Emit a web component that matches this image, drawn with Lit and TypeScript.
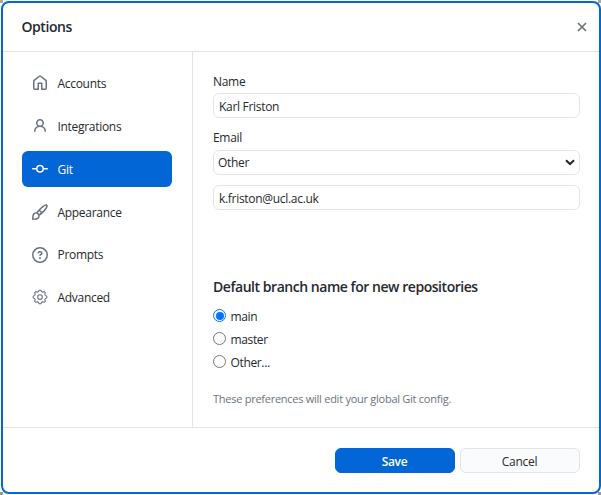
import { LitElement, html, css, svg } from "lit";
import { customElement, state } from "lit/decorators.js";

const gear = (() => {
  const pts: string[] = [];
  for (let i = 0; i < 96; i++) {
    const a = (i / 96) * Math.PI * 2;
    const r = 6.15 + 0.7 * Math.tanh(2 * Math.cos(8 * a));
    pts.push(`${(8 + r * Math.sin(a)).toFixed(2)} ${(8 - r * Math.cos(a)).toFixed(2)}`);
  }
  return `M${pts.join("L")}Z`;
})();

const fill = (d: string) => svg`<path fill="currentColor" fill-rule="evenodd" d=${d}></path>`;

const tabs = [
  { id: "accounts", label: "Accounts", icon: fill("M6.906.664a1.749 1.749 0 0 1 2.187 0l5.25 4.2c.415.332.657.835.657 1.367v7.019A1.75 1.75 0 0 1 13.25 15h-3.5a.75.75 0 0 1-.75-.75V9H7v5.25a.75.75 0 0 1-.75.75h-3.5A1.75 1.75 0 0 1 1 13.25V6.23c0-.531.242-1.034.657-1.366l5.25-4.2Zm1.25 1.171a.25.25 0 0 0-.312 0l-5.25 4.2a.25.25 0 0 0-.094.196v7.019c0 .138.112.25.25.25H5.5V8.25a.75.75 0 0 1 .75-.75h3.5a.75.75 0 0 1 .75.75v5.25h2.75a.25.25 0 0 0 .25-.25V6.23a.25.25 0 0 0-.094-.195Z") },
  { id: "integrations", label: "Integrations", icon: fill("M10.561 8.073a6.005 6.005 0 0 1 3.432 5.142.75.75 0 1 1-1.498.07 4.5 4.5 0 0 0-8.99 0 .75.75 0 0 1-1.498-.07 6.004 6.004 0 0 1 3.431-5.142 3.999 3.999 0 1 1 5.123 0ZM10.5 5a2.5 2.5 0 1 0-5 0 2.5 2.5 0 0 0 5 0Z") },
  { id: "git", label: "Git", icon: fill("M11.93 8.5a4.002 4.002 0 0 1-7.86 0H.75a.75.75 0 0 1 0-1.5h3.32a4.002 4.002 0 0 1 7.86 0h3.32a.75.75 0 0 1 0 1.5Zm-1.43-.75a2.5 2.5 0 1 0-5 0 2.5 2.5 0 0 0 5 0Z") },
  { id: "appearance", label: "Appearance", icon: fill("M11.134 1.535c.7-.509 1.416-.942 2.076-1.155.649-.21 1.463-.267 2.069.34.603.601.568 1.411.368 2.07-.202.668-.624 1.39-1.125 2.096-1.011 1.424-2.496 2.987-3.775 4.249-1.098 1.084-2.132 1.839-3.04 2.3a3.744 3.744 0 0 1-1.055 3.217c-.431.431-1.065.691-1.657.861-.614.177-1.294.287-1.914.357A21.151 21.151 0 0 1 .797 16H.743a.75.75 0 0 1-.743-.742v-.054a21.25 21.25 0 0 1 .13-2.284c.067-.647.187-1.287.358-1.914.17-.591.43-1.226.86-1.657a3.746 3.746 0 0 1 3.227-1.054c.466-.893 1.225-1.907 2.314-2.982 1.271-1.255 2.833-2.75 4.245-3.777ZM1.62 13.089c-.051.464-.086.929-.104 1.395.466-.018.932-.053 1.396-.104a10.511 10.511 0 0 0 1.668-.309c.526-.151.856-.325 1.011-.48a2.25 2.25 0 1 0-3.182-3.182c-.155.155-.329.485-.48 1.01a10.515 10.515 0 0 0-.309 1.67Zm10.396-10.34c-1.224.89-2.605 2.189-3.822 3.384l1.718 1.718c1.21-1.205 2.51-2.597 3.387-3.833.47-.662.78-1.227.912-1.662.134-.444.032-.551.009-.575h-.001V1.78c-.014-.014-.113-.113-.548.027-.432.14-.995.462-1.655.942Zm-4.832 7.266-.001.001a9.859 9.859 0 0 0 1.63-1.142L7.155 7.216a9.7 9.7 0 0 0-1.161 1.607c.482.302.889.71 1.19 1.192Z") },
  { id: "prompts", label: "Prompts", icon: fill("M0 8a8 8 0 1 1 16 0A8 8 0 0 1 0 8Zm8-6.5a6.5 6.5 0 1 0 0 13 6.5 6.5 0 0 0 0-13ZM6.92 6.085h.001a.749.749 0 1 1-1.342-.67c.169-.339.436-.701.849-.977C6.845 4.16 7.369 4 8 4a2.756 2.756 0 0 1 1.637.525c.503.377.863.965.863 1.725 0 .448-.115.83-.329 1.15-.205.307-.47.513-.692.662-.109.072-.22.138-.313.195l-.006.004a6.24 6.24 0 0 0-.26.16.952.952 0 0 0-.276.245.75.75 0 0 1-1.248-.832c.184-.264.42-.489.692-.661.103-.067.207-.132.313-.195l.007-.004c.1-.061.182-.11.258-.161a.969.969 0 0 0 .277-.245C8.96 6.514 9 6.427 9 6.25a.612.612 0 0 0-.262-.525A1.27 1.27 0 0 0 8 5.5c-.369 0-.595.09-.74.187a1.01 1.01 0 0 0-.34.398ZM9 11a1 1 0 1 1-2 0 1 1 0 0 1 2 0Z") },
  { id: "advanced", label: "Advanced", icon: svg`<g fill="none" stroke="currentColor"><path stroke-width="1.1" stroke-linejoin="round" d=${gear}></path><circle cx="8" cy="8" r="2.3" stroke-width="1.1"></circle></g>` },
];

@customElement("app-root")
export class AppRoot extends LitElement {
  @state() tab = "git";
  @state() branch = "main";

  static styles = css`
    :host { display: block; box-sizing: border-box; width: 601px; height: 495px; padding: 1px 0 1px 1px;
      background: linear-gradient(#aaa, #aaa) 0 0 / 3px 3px no-repeat, linear-gradient(#aaa, #aaa) 100% 0 / 3px 3px no-repeat,
        linear-gradient(#999, #999) 0 100% / 3px 3px no-repeat, linear-gradient(#999, #999) 100% 100% / 3px 3px no-repeat, #fff;
      font: 12px/16px "Open Sans", "Noto Sans", sans-serif; letter-spacing: -0.3px; color: #24292e; }
    * { box-sizing: border-box; }
    .dialog { display: flex; flex-direction: column; width: 600px; height: 493px; border: 2px solid #0366d6; border-radius: 8px; background: #fff; overflow: hidden; }
    .header { display: flex; align-items: center; justify-content: space-between; height: 49px; padding: 0 12px 0 18.5px; border-bottom: 1px solid #e1e4e8; }
    .title { margin: 0; font-size: 14px; font-weight: 600; letter-spacing: -0.45px; }
    .close { display: flex; padding: 0; border: 0; background: none; color: #6a737d; margin-top: -1px; }
    .body { display: flex; height: 375px; }
    .tabs { display: flex; flex-direction: column; gap: 6.8px; width: 190px; border-right: 1px solid #e1e4e8; padding: 13.4px 20px 0 19px; }
    .tab { display: flex; align-items: center; gap: 9.5px; height: 36px; width: 150px; flex: none; padding: 0 10px; border-radius: 6px; }
    .tab span { padding-top: 1.6px; }
    .tab svg { color: #6a737d; flex: none; }
    .tab.active { background: #0366d6; color: #fff; }
    .tab.active svg { color: #fff; }
    .content { flex: 1; padding: 22px 19px 0 20px; }
    .label { display: block; height: 19px; line-height: 16px; }
    .email { height: 20px; }
    .field { display: block; width: 367px; height: 25px; border: 1px solid #e1e4e8; border-radius: 6px; background: #fff; padding: 2px 5px 0; font: inherit; letter-spacing: inherit; color: inherit; outline: 0; }
    .gap { height: 12px; }
    .pick { display: flex; align-items: center; justify-content: space-between; padding: 0 4px; margin-bottom: 10px; }
    .subtitle { margin: 68px 0 9px; font-size: 14px; line-height: 18px; font-weight: 600; letter-spacing: -0.46px; white-space: nowrap; }
    .radio { display: flex; align-items: center; gap: 4.5px; height: 23px; letter-spacing: -0.35px; }
    .dot { width: 13px; height: 13px; flex: none; border: 1px solid #767676; border-radius: 50%; display: flex; align-items: center; justify-content: center; margin-bottom: 2px; }
    .dot.on { border-color: #0075ff; }
    .dot.on::after { content: ""; width: 8px; height: 8px; border-radius: 50%; background: #0075ff; }
    .hint { margin: 17px 0 0; font-size: 11px; letter-spacing: -0.26px; color: #6a737d; white-space: nowrap; }
    .footer { display: flex; gap: 5px; justify-content: flex-end; height: 65px; border-top: 1px solid #e1e4e8; padding: 20px 19px 0 0; }
    .button { width: 120px; height: 25px; border: 1px solid #e1e4e8; border-radius: 6px; background: #fafbfc; font: inherit; letter-spacing: inherit; color: inherit; padding: 2px 1px 0 0; }
    .button.primary { background: #0366d6; border-color: #0366d6; color: #fff; font-weight: 600; }
  `;

  render() {
    return html`<div class="dialog">
      <header class="header">
        <h1 class="title">Options</h1>
        <button class="close" aria-label="Close"><svg width="10" height="10" viewBox="0 0 10 10"><path d="M1 1l8 8M9 1L1 9" fill="none" stroke="currentColor" stroke-width="1.7"></path></svg></button>
      </header>
      <div class="body">
        <nav class="tabs">
          ${tabs.map((t) => html`<div class="tab ${t.id === this.tab ? "active" : ""}" @click=${() => (this.tab = t.id)}>
            <svg width="16" height="16" viewBox="0 0 16 16">${t.icon}</svg><span>${t.label}</span>
          </div>`)}
        </nav>
        <main class="content">
          <label class="label">Name</label>
          <input class="field" .value=${"Karl Friston"} />
          <div class="gap"></div>
          <label class="label email">Email</label>
          <div class="field pick"><span>Other</span><svg width="10" height="7" viewBox="0 0 10 7"><path d="M1 1.2l4 3.8 4-3.8" fill="none" stroke="#24292e" stroke-width="2"></path></svg></div>
          <input class="field" .value=${"k.friston@ucl.ac.uk"} />
          <h2 class="subtitle">Default branch name for new repositories</h2>
          ${["main", "master", "Other..."].map((b) => html`<div class="radio" @click=${() => (this.branch = b)}>
            <span class="dot ${b === this.branch ? "on" : ""}"></span><span>${b}</span></div>`)}
          <p class="hint">These preferences will edit your global Git config.</p>
        </main>
      </div>
      <footer class="footer"><button class="button primary">Save</button><button class="button">Cancel</button></footer>
    </div>`;
  }
}
